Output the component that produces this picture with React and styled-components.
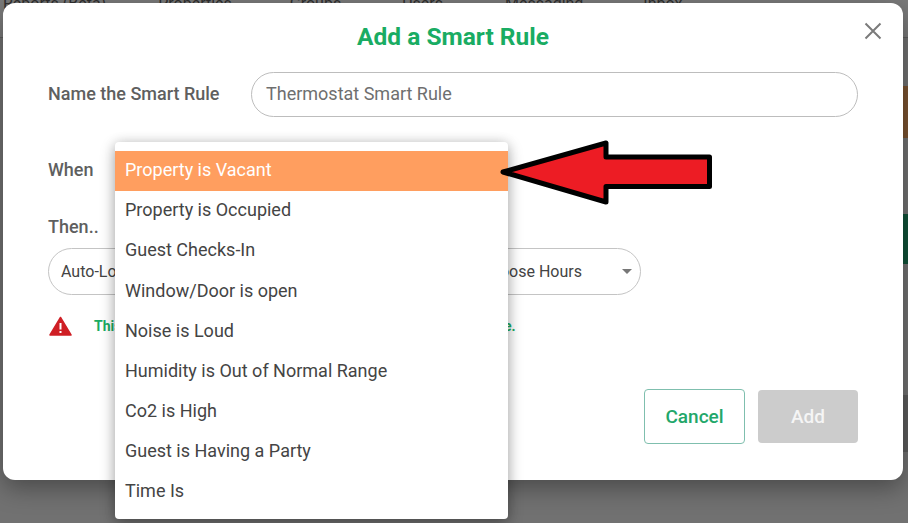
import React from "react";
import styled, { createGlobalStyle } from "styled-components";

const Global = createGlobalStyle`
  html, body {
    margin: 0;
    padding: 0;
    width: 908px;
    height: 523px;
    overflow: hidden;
    font-family: Roboto, "Liberation Sans", sans-serif;
  }
  * { box-sizing: border-box; }
`;

const Page = styled.div`
  position: relative;
  width: 908px;
  height: 523px;
  overflow: hidden;
  background: #717171;
`;

const Nav = styled.div`
  display: flex;
  height: 38px;
  padding-left: 3px;
  border-bottom: 1px solid #5e5e5e;
  color: #2f2f2f;
  font-size: 16px;
  line-height: 8px;
  background: #7a7a7a;
`;

const NavItem = styled.span`
  margin-right: ${(p) => p.$gap}px;
  white-space: nowrap;
`;

const Strip = styled.div`
  position: absolute;
  right: 0;
  top: ${(p) => p.$top}px;
  width: 5px;
  height: ${(p) => p.$height}px;
  background: ${(p) => p.$color};
`;

const Dialog = styled.div`
  position: absolute;
  left: 3px;
  top: 3px;
  width: 900px;
  height: 477px;
  padding: 20px 45px 0;
  border-radius: 12px;
  background: #fff;
  box-shadow: 0 8px 24px rgba(0, 0, 0, 0.35);
  display: flex;
  flex-direction: column;
`;

const Title = styled.h2`
  margin: 0;
  font-size: 24.5px;
  line-height: 28px;
  font-weight: 700;
  color: #19ac63;
  text-align: center;
`;

const Close = styled.div`
  position: absolute;
  top: 19px;
  right: 21px;
  width: 18px;
  height: 18px;
`;

const NameRow = styled.div`
  display: flex;
  align-items: center;
  margin-top: 21px;
`;

const Label = styled.div`
  font-size: 18px;
  font-weight: 500;
  color: #5f5f5f;
  white-space: nowrap;
`;

const NameLabel = styled(Label)`
  width: 203px;
  padding-bottom: 2px;
`;

const NameInput = styled.div`
  width: 607px;
  height: 45px;
  padding: 0 0 2px 14px;
  border: 1px solid #bdbdbd;
  border-radius: 23px;
  display: flex;
  align-items: center;
  font-size: 18px;
  color: #6f6f6f;
`;

const WhenLabel = styled(Label)`
  margin-top: 41px;
  line-height: 24px;
`;

const ThenLabel = styled(Label)`
  margin-top: 33px;
  line-height: 24px;
`;

const Select = styled.div`
  width: 593px;
  height: 47px;
  margin-top: 9px;
  padding: 0 8px 0 12px;
  border: 1px solid #c4c4c4;
  border-radius: 24px;
  display: flex;
  align-items: center;
  justify-content: space-between;
  font-size: 16px;
  color: #444;
  white-space: nowrap;
`;

const SelectRight = styled.div`
  display: flex;
  align-items: center;
  gap: 40px;
`;

const Caret = styled.span`
  width: 0;
  height: 0;
  border-left: 5px solid transparent;
  border-right: 5px solid transparent;
  border-top: 5px solid #777;
`;

const WarnRow = styled.div`
  display: flex;
  align-items: center;
  margin-top: 19px;
  padding-left: 1px;
  height: 24px;
`;

const WarnText = styled.span`
  margin-left: 22px;
  font-size: 14px;
  font-weight: 700;
  color: #19ac63;
  white-space: nowrap;
`;

const Actions = styled.div`
  display: flex;
  justify-content: flex-end;
  align-items: center;
  gap: 13px;
  margin-top: 51px;
`;

const Button = styled.div`
  width: ${(p) => p.$width}px;
  height: ${(p) => p.$height}px;
  border-radius: 4px;
  display: flex;
  align-items: center;
  justify-content: center;
  font-size: 19px;
  font-weight: 500;
  color: ${(p) => (p.$primary ? "#f5f5f5" : "#22a76a")};
  background: ${(p) => (p.$primary ? "#cccccc" : "#fff")};
  border: ${(p) => (p.$primary ? "none" : "1px solid #7fbfae")};
`;

const Menu = styled.ul`
  position: absolute;
  left: 115px;
  top: 142px;
  width: 393px;
  height: 377px;
  margin: 0;
  padding: 9px 0 0;
  list-style: none;
  background: #fff;
  border-radius: 4px;
  box-shadow: 0 5px 15px rgba(0, 0, 0, 0.3), 0 0 12px rgba(0, 0, 0, 0.12);
`;

const Option = styled.li`
  height: 40.1px;
  padding: 0 0 2.6px 10px;
  display: flex;
  align-items: center;
  font-size: 18px;
  color: ${(p) => (p.$active ? "#fff" : "#444")};
  background: ${(p) => (p.$active ? "#ff9e5f" : "transparent")};
`;

const Arrow = styled.svg`
  position: absolute;
  left: 496px;
  top: 136px;
`;

const options = [
  "Property is Vacant",
  "Property is Occupied",
  "Guest Checks-In",
  "Window/Door is open",
  "Noise is Loud",
  "Humidity is Out of Normal Range",
  "Co2 is High",
  "Guest is Having a Party",
  "Time Is",
];

export default function App() {
  return (
    <Page>
      <Global />
      <Nav>
        <NavItem $gap={52}>Reports (Beta)</NavItem>
        <NavItem $gap={58}>Properties</NavItem>
        <NavItem $gap={61}>Groups</NavItem>
        <NavItem $gap={62}>Users</NavItem>
        <NavItem $gap={60}>Messaging</NavItem>
        <NavItem $gap={0}>Inbox</NavItem>
      </Nav>
      <Strip $top={86} $height={52} $color="#7a5230" />
      <Strip $top={214} $height={50} $color="#0f5138" />
      <Strip $top={395} $height={57} $color="#5c5c5c" />
      <Dialog>
        <Title>Add a Smart Rule</Title>
        <Close>
          <svg width="18" height="18" viewBox="0 0 18 18">
            <path d="M1.5 1.5 L16.5 16.5 M16.5 1.5 L1.5 16.5" stroke="#7b7b7b" strokeWidth="2" fill="none" />
          </svg>
        </Close>
        <NameRow>
          <NameLabel>Name the Smart Rule</NameLabel>
          <NameInput>Thermostat Smart Rule</NameInput>
        </NameRow>
        <WhenLabel>When</WhenLabel>
        <ThenLabel>Then..</ThenLabel>
        <Select>
          <span>Auto-Lock</span>
          <SelectRight>
            <span>Choose Hours</span>
            <Caret />
          </SelectRight>
        </Select>
        <WarnRow>
          <svg width="23" height="20" viewBox="0 0 23 20">
            <path d="M11.5 1.5 L22 19 H1 Z" fill="#cf1f25" stroke="#cf1f25" strokeWidth="1.5" strokeLinejoin="round" />
            <rect x="10.5" y="7" width="2" height="6.5" fill="#fff" />
            <rect x="10.5" y="15" width="2" height="2" fill="#fff" />
          </svg>
          <WarnText>This Smart Rule will run while the property stays in this state there.</WarnText>
        </WarnRow>
        <Actions>
          <Button $width={101} $height={55}>Cancel</Button>
          <Button $primary $width={100} $height={53}>Add</Button>
        </Actions>
      </Dialog>
      <Menu>
        {options.map((o, i) => (
          <Option key={o} $active={i === 0}>{o}</Option>
        ))}
      </Menu>
      <Arrow width="222" height="72" viewBox="0 0 222 72">
        <path
          d="M7 36 L110 7 V21 H213.5 V50.5 H110 V66 Z"
          fill="#ed1c24"
          stroke="#000"
          strokeWidth="5"
          strokeLinejoin="round"
        />
      </Arrow>
    </Page>
  );
}
